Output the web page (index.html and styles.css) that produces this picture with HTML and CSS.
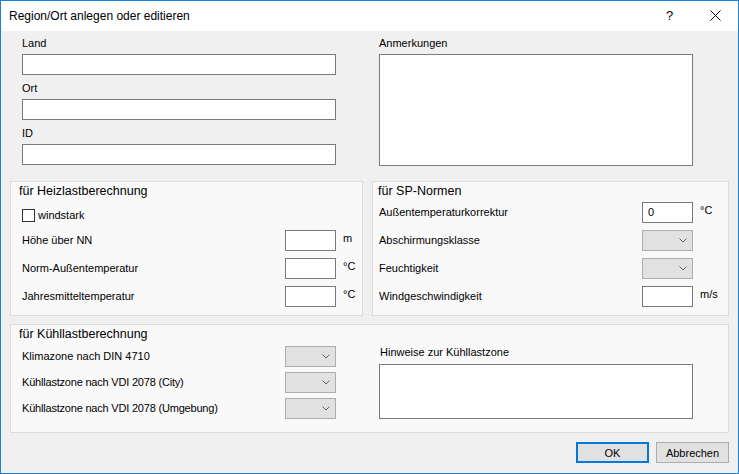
FILE: index.html
```html
<!DOCTYPE html>
<html lang="de">
<head>
<meta charset="utf-8">
<title>Region/Ort anlegen oder editieren</title>
<link rel="stylesheet" href="styles.css">
</head>
<body>
<div class="window">
  <div class="titlebar">
    <span class="title">Region/Ort anlegen oder editieren</span>
    <span class="help">?</span>
    <span class="close"><svg width="11" height="11" viewBox="0 0 11 11"><path d="M0.5 0.5 L10.5 10.5 M10.5 0.5 L0.5 10.5" stroke="#000" stroke-width="1" fill="none"/></svg></span>
  </div>
  <div class="body">
    <div class="top">
      <div class="fields fields-left">
        <div class="field"><div class="lbl">Land</div><div class="input input-wide"></div></div>
        <div class="field"><div class="lbl">Ort</div><div class="input input-wide"></div></div>
        <div class="field"><div class="lbl">ID</div><div class="input input-wide"></div></div>
      </div>
      <div class="fields fields-right">
        <div class="field"><div class="lbl">Anmerkungen</div><div class="input textarea-notes"></div></div>
      </div>
    </div>

    <div class="groups">
      <div class="group group-heiz">
        <div class="gtitle">für Heizlastberechnung</div>
        <div class="check-row"><span class="checkbox"></span><span class="lbl">windstark</span></div>
        <div class="rows rows-heiz">
          <div class="row"><span class="lbl">Höhe über NN</span><div class="input input-small"></div><span class="unit">m</span></div>
          <div class="row"><span class="lbl">Norm-Außentemperatur</span><div class="input input-small"></div><span class="unit">°C</span></div>
          <div class="row"><span class="lbl">Jahresmitteltemperatur</span><div class="input input-small"></div><span class="unit">°C</span></div>
        </div>
      </div>
      <div class="group group-sp">
        <div class="gtitle">für SP-Normen</div>
        <div class="rows rows-sp">
          <div class="row"><span class="lbl">Außentemperaturkorrektur</span><div class="input input-small"><span class="val">0</span></div><span class="unit">°C</span></div>
          <div class="row"><span class="lbl">Abschirmungsklasse</span><div class="combo"><svg width="8" height="5" viewBox="0 0 8 5"><path d="M0.5 0.5 L4 4 L7.5 0.5" stroke="#606060" stroke-width="1" fill="none"/></svg></div><span class="unit"></span></div>
          <div class="row"><span class="lbl">Feuchtigkeit</span><div class="combo"><svg width="8" height="5" viewBox="0 0 8 5"><path d="M0.5 0.5 L4 4 L7.5 0.5" stroke="#606060" stroke-width="1" fill="none"/></svg></div><span class="unit"></span></div>
          <div class="row"><span class="lbl">Windgeschwindigkeit</span><div class="input input-small"></div><span class="unit">m/s</span></div>
        </div>
      </div>
    </div>

    <div class="group group-kuehl">
      <div class="kuehl-left">
        <div class="gtitle">für Kühllastberechnung</div>
        <div class="rows rows-kuehl">
          <div class="row"><span class="lbl">Klimazone nach DIN 4710</span><div class="combo"><svg width="8" height="5" viewBox="0 0 8 5"><path d="M0.5 0.5 L4 4 L7.5 0.5" stroke="#606060" stroke-width="1" fill="none"/></svg></div><span class="unit"></span></div>
          <div class="row"><span class="lbl lbl-tight">Kühllastzone nach VDI 2078 (City)</span><div class="combo"><svg width="8" height="5" viewBox="0 0 8 5"><path d="M0.5 0.5 L4 4 L7.5 0.5" stroke="#606060" stroke-width="1" fill="none"/></svg></div><span class="unit"></span></div>
          <div class="row"><span class="lbl lbl-tight">Kühllastzone nach VDI 2078 (Umgebung)</span><div class="combo"><svg width="8" height="5" viewBox="0 0 8 5"><path d="M0.5 0.5 L4 4 L7.5 0.5" stroke="#606060" stroke-width="1" fill="none"/></svg></div><span class="unit"></span></div>
        </div>
      </div>
      <div class="kuehl-right">
        <div class="lbl">Hinweise zur Kühllastzone</div>
        <div class="input textarea-hint"></div>
      </div>
    </div>

    <div class="buttons">
      <div class="btn btn-default">OK</div>
      <div class="btn">Abbrechen</div>
    </div>
  </div>
</div>
</body>
</html>
```

FILE: styles.css
```css
* { box-sizing: border-box; }
html, body { margin: 0; padding: 0; }
body {
  width: 739px;
  height: 474px;
  overflow: hidden;
  font-family: "Liberation Sans", Arial, sans-serif;
  font-size: 11px;
  color: #000;
  background: #f0f0f0;
}
.window {
  width: 739px;
  height: 474px;
  border: 1px solid #1883d7;
  background: #f0f0f0;
  display: flex;
  flex-direction: column;
}
.titlebar {
  height: 30px;
  flex: none;
  background: #fff;
  display: flex;
  align-items: center;
  padding-left: 8px;
}
.title {
  font-size: 12px;
  line-height: 30px;
  flex: 1;
}
.help {
  font-size: 13px;
  line-height: 30px;
  width: 8px;
  margin-right: 36px;
}
.close {
  width: 11px;
  height: 11px;
  margin-right: 17px;
  display: flex;
  margin-top: -2px;
}
.body {
  flex: 1;
  padding: 0 9px;
  display: flex;
  flex-direction: column;
}
.top {
  height: 150px;
  display: grid;
  grid-template-columns: 353px 357px;
  column-gap: 9px;
  padding-top: 6px;
}
.fields { display: flex; flex-direction: column; gap: 7px; }
.fields-left { padding-left: 12px; }
.fields-right { padding-left: 7px; }
.field { display: flex; flex-direction: column; }
.lbl {
  font-size: 11px;
  line-height: 13px;
  white-space: nowrap;
}
.lbl-tight { letter-spacing: -0.2px; }
.field .lbl { margin-bottom: 4px; }
.input {
  background: #fff;
  border: 1px solid #7a7a7a;
  height: 21px;
}
.input-wide { width: 314px; }
.textarea-notes { width: 314px; height: 112px; }
.groups {
  display: grid;
  grid-template-columns: 353px 357px;
  column-gap: 9px;
  height: 135px;
}
.group {
  background: #f9f9f9;
  border: 1px solid #dcdcdc;
  padding-top: 2px;
}
.gtitle {
  font-size: 12.5px;
  line-height: 15px;
}
.group-heiz .gtitle { padding-left: 8px; }
.group-sp .gtitle { padding-left: 5px; }
.check-row {
  display: flex;
  align-items: center;
  gap: 3px;
  margin-top: 10px;
  padding-left: 11px;
  height: 13px;
}
.checkbox {
  width: 13px;
  height: 13px;
  border: 1px solid #333;
  background: #fff;
  flex: none;
}
.rows { display: flex; flex-direction: column; gap: 7px; }
.row {
  display: grid;
  align-items: center;
  height: 21px;
}
.rows-heiz { margin-top: 8px; }
.rows-heiz .row { grid-template-columns: 1fr 51px 26px; padding-left: 11px; }
.rows-sp { margin-top: 3px; }
.rows-sp .row { grid-template-columns: 1fr 51px 35px; padding-left: 6px; }
.input-small { width: 51px; height: 21px; display: flex; align-items: center; }
.val { padding-left: 5px; line-height: 13px; }
.unit {
  align-self: start;
  padding-left: 7px;
  line-height: 13px;
  margin-top: 2px;
}
.combo {
  width: 51px;
  height: 21px;
  background: #e1e1e1;
  border: 1px solid #adadad;
  display: flex;
  align-items: center;
  justify-content: flex-end;
  padding-right: 5px;
}
.group-kuehl {
  margin-top: 8px;
  height: 109px;
  display: grid;
  grid-template-columns: 351px 1fr;
}
.kuehl-left .gtitle { padding-left: 8px; }
.rows-kuehl { margin-top: 4px; gap: 5px; }
.rows-kuehl .row { grid-template-columns: 1fr 51px 26px; padding-left: 11px; }
.kuehl-right {
  padding-left: 17px;
  padding-top: 19px;
  display: flex;
  flex-direction: column;
}
.kuehl-right .lbl { margin-bottom: 5px; padding-left: 1px; }
.textarea-hint { width: 314px; height: 55px; }
.buttons {
  margin-top: 9px;
  display: flex;
  justify-content: flex-end;
  gap: 7px;
}
.btn {
  width: 73px;
  height: 21px;
  background: #e1e1e1;
  border: 1px solid #adadad;
  display: flex;
  align-items: center;
  justify-content: center;
  font-size: 11px;
}
.btn-default { border: 2px solid #0078d7; }
```
